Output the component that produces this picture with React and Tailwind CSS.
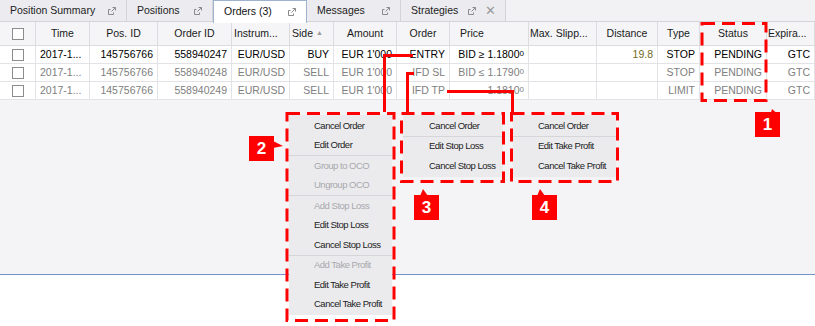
import React from 'react';

// column widths of the orders grid, in px
const grid = 'grid grid-cols-[36px_54px_68px_74px_58px_44px_63px_53px_79px_68px_61px_42px_67px_48px]';

const rows = [
  { time: '2017-1...', pos: '145756766', id: '558940247', ins: 'EUR/USD', side: 'BUY', amount: "EUR 1'000", order: 'ENTRY', price: ['BID ≥ 1.1800', '0'], dist: '19.8', type: 'STOP', status: 'PENDING', exp: 'GTC', active: true },
  { time: '2017-1...', pos: '145756766', id: '558940248', ins: 'EUR/USD', side: 'SELL', amount: "EUR 1'000", order: 'IFD SL', price: ['BID ≤ 1.1790', '0'], dist: '', type: 'STOP', status: 'PENDING', exp: 'GTC' },
  { time: '2017-1...', pos: '145756766', id: '558940249', ins: 'EUR/USD', side: 'SELL', amount: "EUR 1'000", order: 'IFD TP', price: ['1.1810', '0'], dist: '', type: 'LIMIT', status: 'PENDING', exp: 'GTC' },
];

function PopOut() {
  return (
    <svg width="10" height="10" viewBox="0 0 10 10" className="shrink-0">
      <path d="M1.5 3.5v5h5" fill="none" stroke="#8a8a8a" strokeWidth="1" />
      <path d="M1.5 3.5h2M6.5 8.5v-2" fill="none" stroke="#8a8a8a" strokeWidth="1" />
      <path d="M4.5 5.5L8.5 1.5M5.5 1.5h3v3" fill="none" stroke="#8a8a8a" strokeWidth="1" />
    </svg>
  );
}

function Tab({ label, active, width, close }) {
  return (
    <div
      className={
        'flex items-center justify-between pl-[10px] pr-[9px] ' +
        (active
          ? 'h-[23px] -mb-px relative bg-white border-x border-t border-[#9fb2cf] text-[#111]'
          : 'h-full bg-[#ececf0] border-r border-[#d4d4d8] text-[#222]')
      }
      style={{ width }}
    >
      <span>{label}</span>
      <div className="flex items-center gap-[8px]">
        <PopOut />
        {close && <span className="text-[#9a9a9a] text-[13px] leading-none">✕</span>}
      </div>
    </div>
  );
}

function Check() {
  return <div className="w-[12px] h-[12px] border border-[#8c8c8c] bg-white" />;
}

function Menu({ items, className }) {
  return (
    <div className={'absolute bg-[#ebebee] py-[1px] ' + className}>
      {items.map((it, i) =>
        it === '-' ? (
          <div key={i} className="h-px bg-[#d6d6da]" />
        ) : (
          <div
            key={i}
            className={'h-[19.5px] flex items-center text-[9.5px] tracking-[-0.5px] ' + (it.startsWith('!') ? 'text-[#a8a8ac]' : 'text-[#222]')}
            style={{ paddingLeft: 'var(--pl)' }}
          >
            {it.replace('!', '')}
          </div>
        )
      )}
    </div>
  );
}

function Label({ n, className }) {
  return (
    <div className={'absolute w-[25px] h-[25px] bg-[#ff0000] text-white font-bold text-[17px] flex items-center justify-center ' + className}>
      {n}
    </div>
  );
}

export default function App() {
  const cell = 'h-[18px] flex items-center border-r border-b border-[#e3e3e7] px-[4px] whitespace-nowrap overflow-hidden';
  return (
    <div
      className="relative w-[815px] h-[326px] flex flex-col overflow-hidden text-[10.5px]"
      style={{ fontFamily: '"Liberation Sans", Arial, sans-serif' }}
    >
      {/* tab bar */}
      <div className="h-[22px] flex bg-[#f2f2f5] border-b border-[#d4d4d8]">
        <Tab label="Position Summary" width={127} />
        <Tab label="Positions" width={86} />
        <Tab label="Orders (3)" width={94} active />
        <Tab label="Messages" width={94} />
        <Tab label="Strategies" width={105} close />
      </div>

      {/* grid area */}
      <div className="flex-1 bg-[#f4f4f7] border-b border-[#7391c2]">
        <div className={grid + ' bg-[#f5f5f7] text-[#1a1a1a]'}>
          {[
            ['', 'justify-center'],
            ['Time', 'justify-center'],
            ['Pos. ID', 'justify-center'],
            ['Order ID', 'justify-center'],
            ['Instrum...', 'justify-start'],
            ['Side', 'justify-start'],
            ['Amount', 'justify-center'],
            ['Order', 'justify-center'],
            ['Price', 'justify-start pl-[10px]'],
            ['Max. Slipp...', 'justify-start pl-[1px]'],
            ['Distance', 'justify-center'],
            ['Type', 'justify-center'],
            ['Status', 'justify-center'],
            ['Expira...', 'justify-start pl-[1px]'],
          ].map(([h, a], i) => (
            <div key={i} className={'h-[24px] flex items-center border-r border-b border-[#dcdce0] px-[2px] whitespace-nowrap ' + a}>
              {i === 0 ? <Check /> : h}
              {h === 'Side' && <span className="ml-[3px] text-[7px] text-[#9a9a9a]">▲</span>}
            </div>
          ))}
        </div>
        {rows.map((r, i) => (
          <div key={i} className={grid + ' bg-white ' + (r.active ? 'text-black' : 'text-[#808080]')}>
            <div className={cell + ' justify-center'}><Check /></div>
            <div className={cell}>{r.time}</div>
            <div className={cell + ' justify-end'}>{r.pos}</div>
            <div className={cell + ' justify-end'}>{r.id}</div>
            <div className={cell + ' justify-end'}>{r.ins}</div>
            <div className={cell + ' justify-end'}>{r.side}</div>
            <div className={cell + ' justify-end'}>{r.amount}</div>
            <div className={cell + ' justify-end'}>{r.order}</div>
            <div className={cell + ' justify-end'}>
              {r.price[0]}
              <span className="text-[8px] self-end mb-[3px]">{r.price[1]}</span>
            </div>
            <div className={cell} />
            <div className={cell + ' justify-end text-[#726c22]'}>{r.dist}</div>
            <div className={cell + ' justify-end'}>{r.type}</div>
            <div className={cell + ' justify-end'}>{r.status}</div>
            <div className={cell + ' justify-end'}>{r.exp}</div>
          </div>
        ))}
      </div>
      <div className="h-[51px] bg-white" />

      {/* context menus */}
      <Menu
        className="left-[289px] top-[115px] w-[103px] [--pl:25px]"
        items={['Cancel Order', 'Edit Order', '-', '!Group to OCO', '!Ungroup OCO', '-', '!Add Stop Loss', 'Edit Stop Loss', 'Cancel Stop Loss', '-', '!Add Take Profit', 'Edit Take Profit', 'Cancel Take Profit']}
      />
      <Menu
        className="left-[403px] top-[115px] w-[100px] [--pl:26px]"
        items={['Cancel Order', '-', 'Edit Stop Loss', 'Cancel Stop Loss']}
      />
      <Menu
        className="left-[513px] top-[115px] w-[103px] [--pl:25px]"
        items={['Cancel Order', '-', 'Edit Take Profit', 'Cancel Take Profit']}
      />

      {/* annotations */}
      <svg className="absolute left-0 top-0 pointer-events-none" width="815" height="326">
        <g fill="none" stroke="#ff0000" strokeWidth="3" strokeDasharray="13 7">
          <rect x="702" y="23.5" width="64" height="77" />
          <rect x="287" y="113.5" width="107" height="207" />
          <rect x="401.5" y="113.5" width="102" height="68" />
          <rect x="511.5" y="113.5" width="106" height="68" />
        </g>
        <g fill="none" stroke="#ff0000" strokeWidth="3">
          <path d="M413 55.5H384.5V112" />
          <path d="M414 73.5H407.5V112" />
          <path d="M447 91.5H512.5V112" />
        </g>
        <g fill="#ff0000">
          <path d="M770 116L780 116L772 109Z" />
          <path d="M273 141L283 146L273 148Z" />
          <path d="M420 196L428 196L423 189Z" />
          <path d="M537 196L545 196L540 189Z" />
        </g>
      </svg>
      <Label n="1" className="left-[755px] top-[112px]" />
      <Label n="2" className="left-[249px] top-[136px]" />
      <Label n="3" className="left-[414px] top-[195px]" />
      <Label n="4" className="left-[532px] top-[195px]" />
    </div>
  );
}
